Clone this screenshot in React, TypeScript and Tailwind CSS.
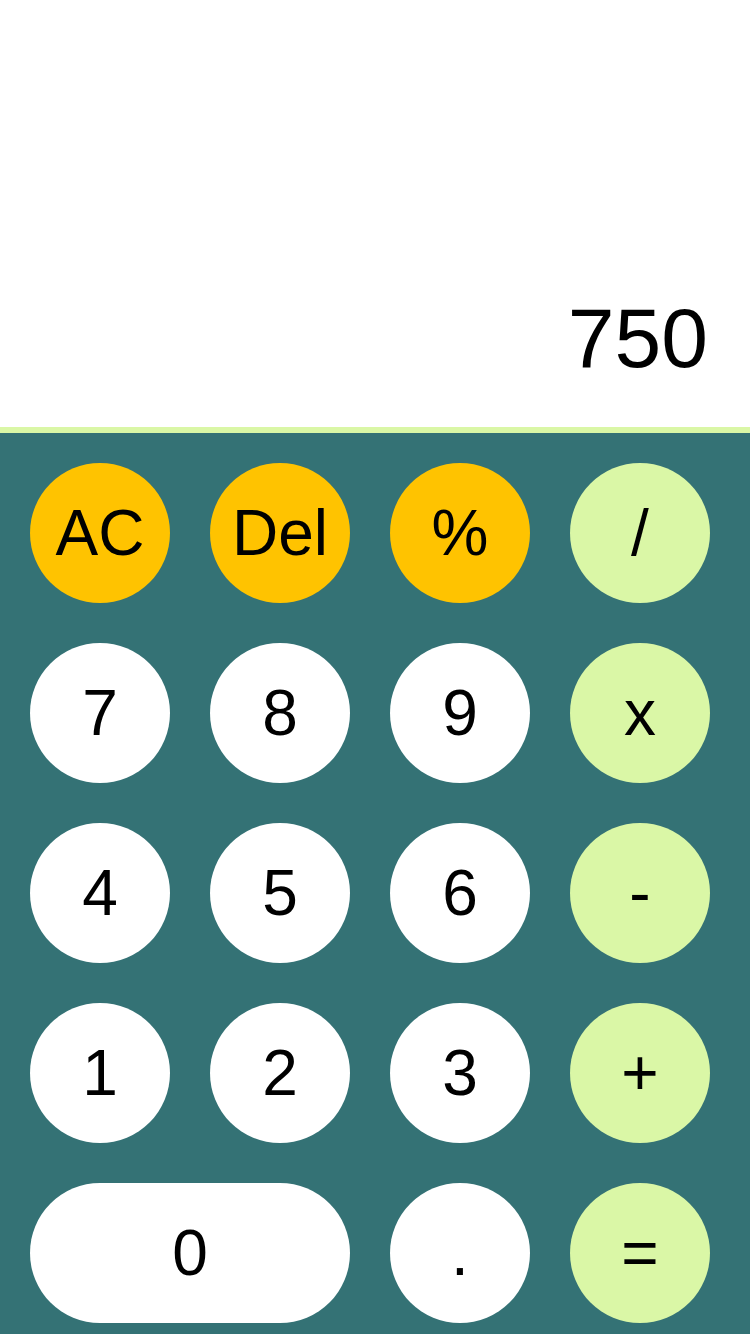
const rows: { label: string; kind: "fn" | "num" | "op"; wide?: boolean }[][] = [
  [
    { label: "AC", kind: "fn" },
    { label: "Del", kind: "fn" },
    { label: "%", kind: "fn" },
    { label: "/", kind: "op" },
  ],
  [
    { label: "7", kind: "num" },
    { label: "8", kind: "num" },
    { label: "9", kind: "num" },
    { label: "x", kind: "op" },
  ],
  [
    { label: "4", kind: "num" },
    { label: "5", kind: "num" },
    { label: "6", kind: "num" },
    { label: "-", kind: "op" },
  ],
  [
    { label: "1", kind: "num" },
    { label: "2", kind: "num" },
    { label: "3", kind: "num" },
    { label: "+", kind: "op" },
  ],
  [
    { label: "0", kind: "num", wide: true },
    { label: ".", kind: "num" },
    { label: "=", kind: "op" },
  ],
];

const kindClass = {
  fn: "bg-[#ffc300]",
  num: "bg-white",
  op: "bg-[#daf7a6]",
};

export default function App() {
  return (
    <div
      className="w-[750px] h-[1334px] flex flex-col bg-white overflow-hidden"
      style={{ fontFamily: '"Liberation Sans", Arial, sans-serif' }}
    >
      {/* Display */}
      <div className="h-[427px] flex items-end justify-end pr-[42px] pb-[47px]">
        <span className="text-[84px] leading-none text-black">750</span>
      </div>

      {/* Keypad */}
      <div className="flex-1 border-t-[6px] border-[#daf7a6] bg-[#347275] px-[30px] pt-[30px]">
        <div className="grid grid-cols-[repeat(4,140px)] gap-[40px]">
          {rows.flat().map((b) => (
            <button
              key={b.label}
              className={`${kindClass[b.kind]} ${
                b.wide ? "col-span-2" : ""
              } h-[140px] rounded-full flex items-center justify-center text-[64px] leading-none text-black`}
            >
              {b.label}
            </button>
          ))}
        </div>
      </div>
    </div>
  );
}
